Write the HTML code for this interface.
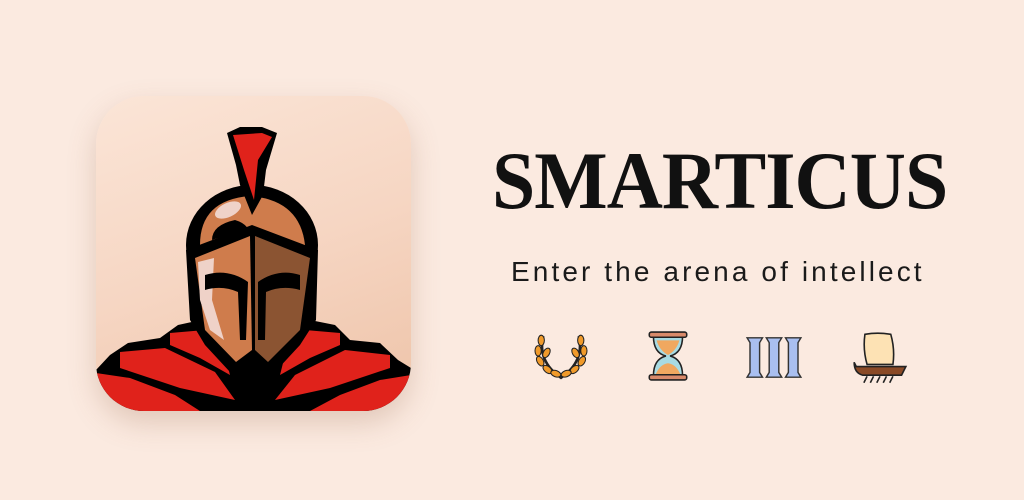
<!DOCTYPE html>
<html><head><style>
body{margin:0;width:1024px;height:500px;background:#fbeae0;overflow:hidden;position:relative;font-family:"Liberation Sans",sans-serif}
.card{position:absolute;left:96px;top:96px;width:315px;height:315px;border-radius:48px;overflow:hidden;background:linear-gradient(160deg,#fbe5d7 0%,#f6d6c3 50%,#eec3a8 100%);box-shadow:0 12px 28px rgba(150,100,70,.25)}
h1{position:absolute;left:492px;top:140px;margin:0;font-family:"Liberation Serif",serif;font-weight:bold;font-size:82px;letter-spacing:-1px;color:#111;line-height:1;transform:scaleX(0.948);transform-origin:left}
.sub{position:absolute;left:511px;top:256px;font-size:28px;color:#1a1a1a;letter-spacing:3.1px}
.ic{position:absolute;top:330px}
</style></head><body>
<div class="card">
<svg width="315" height="315" viewBox="96 96 315 315">
<polygon points="96,370 110,355 128,343 160,338 178,325 210,318 300,318 335,325 350,340 380,343 398,360 411,368 411,411 96,411" fill="#000"/>
<polygon points="96,373 130,378 175,395 200,411 96,411" fill="#e0221b"/>
<polygon points="120,352 165,348 215,372 235,400 180,388 120,368" fill="#e0221b"/>
<polygon points="170,333 205,330 225,355 230,375 200,358 170,345" fill="#e0221b"/>
<polygon points="411,375 380,380 340,395 310,411 411,411" fill="#e0221b"/>
<polygon points="390,355 345,350 295,375 275,400 330,388 390,368" fill="#e0221b"/>
<polygon points="340,333 305,330 285,355 280,375 310,358 340,345" fill="#e0221b"/>
<ellipse cx="252" cy="245" rx="66" ry="60" fill="#000"/>
<path d="M200,245 Q200,200 250,196 Q300,200 305,245 Z" fill="#cf7c4c"/>
<path d="M212,240 Q212,225 235,220 Q252,225 250,240 Q235,232 212,240Z" fill="#000"/>
<ellipse cx="228" cy="210" rx="14" ry="7" transform="rotate(-25 228 210)" fill="#efd2c8"/>
<polygon points="227,133 240,127 262,127 277,133 266,170 263,195 252,215 240,185 236,165" fill="#000"/>
<polygon points="233,135 262,133 272,137 258,160 254,200 244,170" fill="#e0221b"/>
<path d="M186,250 L252,225 L318,250 L316,320 L300,345 L275,372 L255,360 L250,360 L230,372 L205,345 L190,320 Z" fill="#000"/>
<path d="M195,258 L250,236 L252,350 L236,362 L205,330 Z" fill="#cf7c4c"/>
<path d="M255,236 L310,258 L300,330 L268,362 L255,350 Z" fill="#8b5432"/>
<path d="M198,262 L214,258 L212,300 L224,340 L210,330 L200,300Z" fill="#efd2c8"/>
<path d="M205,275 Q228,268 248,282 L246,340 L240,340 L238,292 Q222,285 205,290Z" fill="#000"/>
<path d="M300,275 Q278,268 258,282 L258,340 L265,340 L266,292 Q282,285 300,290Z" fill="#000"/>
</svg>
</div>
<h1>SMARTICUS</h1>
<div class="sub">Enter the arena of intellect</div>
<svg class="ic" style="left:532px" width="58" height="52" viewBox="0 0 54 50">
<path d="M10,6 Q4,30 27,46 Q50,30 44,6" fill="none" stroke="#222" stroke-width="2.5"/>
<g fill="#f09a2a" stroke="#222" stroke-width="1">
<ellipse cx="8" cy="10" rx="3" ry="5"/><ellipse cx="5" cy="20" rx="3" ry="5"/><ellipse cx="7" cy="30" rx="3" ry="5" transform="rotate(-30 7 30)"/><ellipse cx="14" cy="38" rx="3" ry="5" transform="rotate(-50 14 38)"/><ellipse cx="13" cy="22" rx="3" ry="5" transform="rotate(30 13 22)"/><ellipse cx="22" cy="42" rx="3" ry="5" transform="rotate(-70 22 42)"/>
<ellipse cx="46" cy="10" rx="3" ry="5"/><ellipse cx="49" cy="20" rx="3" ry="5"/><ellipse cx="47" cy="30" rx="3" ry="5" transform="rotate(30 47 30)"/><ellipse cx="40" cy="38" rx="3" ry="5" transform="rotate(50 40 38)"/><ellipse cx="41" cy="22" rx="3" ry="5" transform="rotate(-30 41 22)"/><ellipse cx="32" cy="42" rx="3" ry="5" transform="rotate(70 32 42)"/>
</g></svg>
<svg class="ic" style="left:647px" width="42" height="52" viewBox="0 0 40 50">
<path d="M6,6 Q6,22 18,25 Q6,28 6,44 L34,44 Q34,28 22,25 Q34,22 34,6Z" fill="#a8dbe3" stroke="#222" stroke-width="1.5"/>
<path d="M9,10 L31,10 Q28,20 20,24 Q12,20 9,10Z" fill="#f0a860"/>
<path d="M8,43 Q12,33 20,32 Q28,33 32,43Z" fill="#f0a860"/>
<rect x="2" y="2" width="36" height="5" rx="2" fill="#d98a6a" stroke="#222" stroke-width="1.5"/>
<rect x="2" y="43" width="36" height="5" rx="2" fill="#d98a6a" stroke="#222" stroke-width="1.5"/>
</svg>
<svg class="ic" style="left:744px;top:334px" width="60" height="48" viewBox="0 0 60 50">
<g fill="#a9bff0" stroke="#333" stroke-width="1.5">
<path d="M2,4 L18,4 L15,9 L15,40 L18,45 L2,45 L5,40 L5,9Z"/>
<path d="M22,4 L38,4 L35,9 L35,40 L38,45 L22,45 L25,40 L25,9Z"/>
<path d="M42,4 L58,4 L55,9 L55,40 L58,45 L42,45 L45,40 L45,9Z"/>
</g></svg>
<svg class="ic" style="left:852px" width="56" height="56" viewBox="0 0 52 52">
<path d="M12,4 Q24,2 36,4 Q40,18 38,32 L14,32 Q10,18 12,4Z" fill="#fde2b4" stroke="#222" stroke-width="1.5"/>
<path d="M2,30 Q2,40 10,42 L46,42 L50,34 L4,34Z" fill="#8a4a26" stroke="#222" stroke-width="1.5"/>
<path d="M14,43 l-3,6 M20,43 l-3,6 M26,43 l-3,6 M32,43 l-3,6 M38,43 l-3,6" stroke="#222" stroke-width="1.5"/>
</svg>
</body></html>
